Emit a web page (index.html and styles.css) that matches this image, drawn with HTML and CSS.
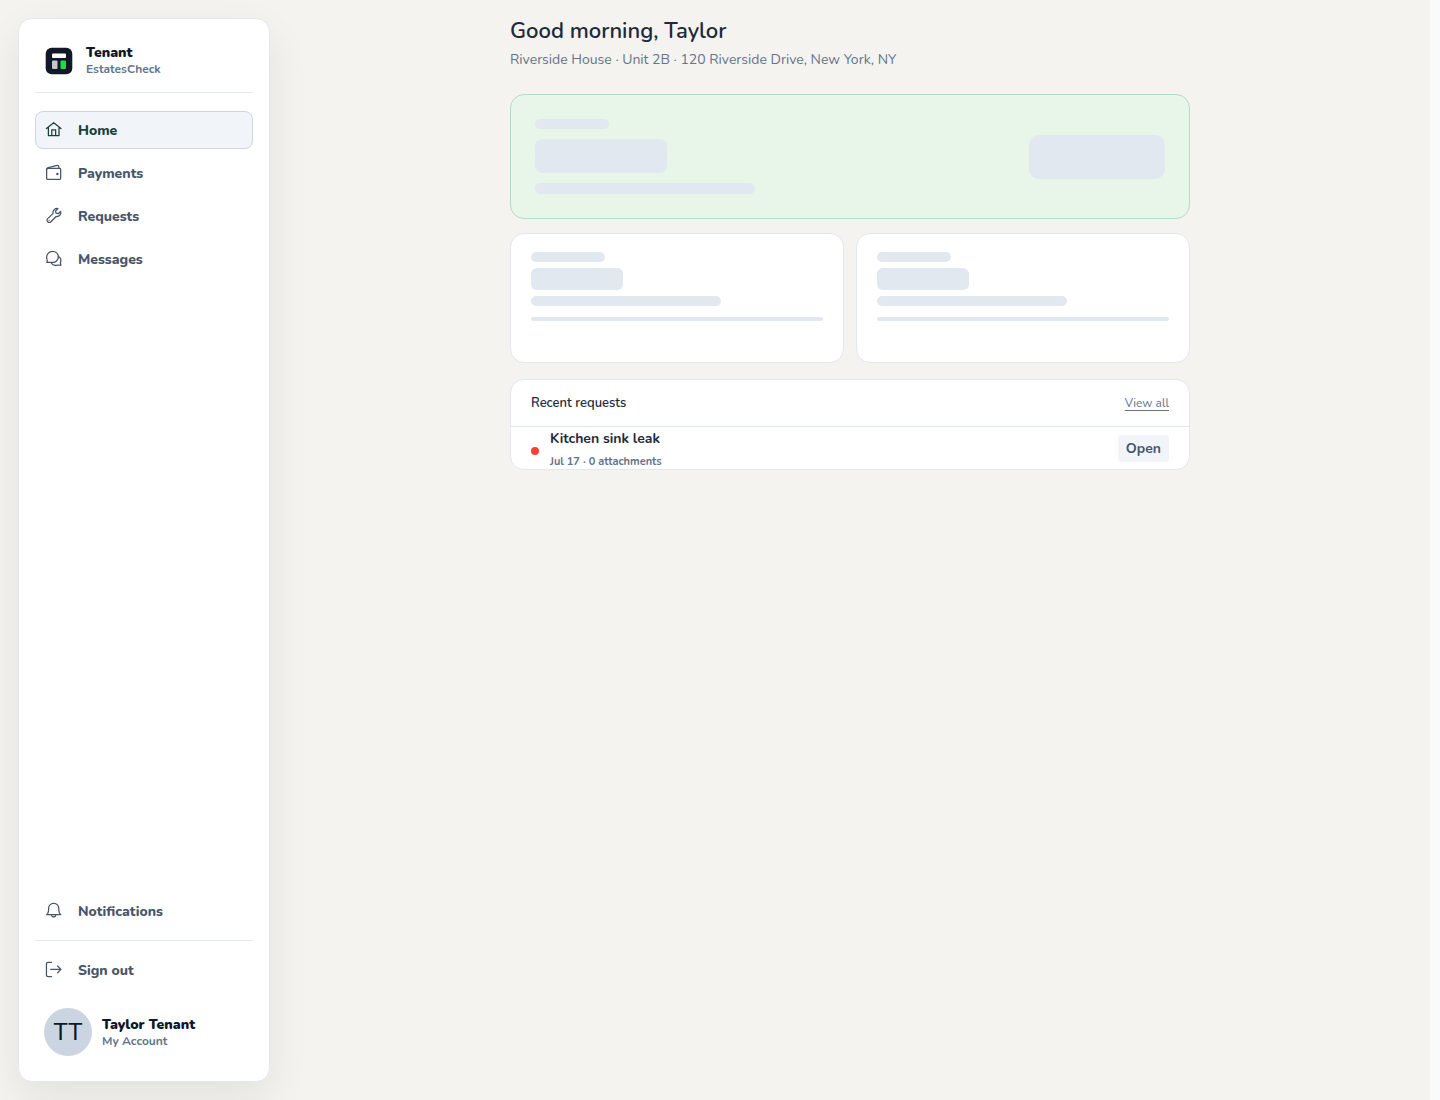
FILE: index.html
```html
<!DOCTYPE html>
<html lang="en">
<head>
    <meta charset="UTF-8">
    <meta name="viewport" content="width=device-width, initial-scale=1.0">
    <title>Home - EstatesCheck</title>
    <link rel="stylesheet" href="styles.css">
</head>
<body>

<div class="app">
    <aside class="sidebar">
        <a class="brand" href="#">
            <svg class="brand-logo" viewBox="0 0 28 28" aria-hidden="true">
                <rect x="0.7" y="0.7" width="26.6" height="26.6" rx="6" fill="#111827"/>
                <rect x="7" y="6.5" width="14" height="4.5" rx="1" fill="#fff"/>
                <rect x="7" y="13.5" width="5.5" height="8.5" rx="1" fill="#c4c7ce"/>
                <rect x="15.5" y="13.5" width="5.5" height="8.5" rx="1" fill="#22d94a"/>
            </svg>
            <span class="brand-text">
                <span class="name">Tenant</span>
                <span class="sub">EstatesCheck</span>
            </span>
        </a>

        <nav class="nav">
            <a class="nav-item active" href="#">
                <svg class="icon" viewBox="-0.5 -0.3 18.6 18.6" aria-hidden="true">
                    <path d="M1 7.5 8.500 1.500l7.500 6M3 6v8.700h11V6M6.500 14.500V8.800h4v5.700"/>
                </svg>
                <span>Home</span>
            </a>
            <a class="nav-item" href="#">
                <svg class="icon" viewBox="-0.5 -0.3 18.6 18.6" aria-hidden="true">
                    <rect x="1.2" y="4.3" width="14.5" height="11.2" rx="1"/>
                    <path d="M1.300 5c0-.8.6-1.300 1.500-1.500l9.400-2.300c1-.2 1.600.3 1.600 1.200v1.900"/>
                    <circle cx="12.300" cy="10" r="0.600" fill="currentColor"/>
                </svg>
                <span>Payments</span>
            </a>
            <a class="nav-item" href="#">
                <svg class="icon" viewBox="-0.5 -0.3 18.6 18.6" aria-hidden="true">
                    <path d="M15.600 4.200c.9 3-1.300 5.700-4.600 5.300L5.600 15c-.9.9-2.400.9-3.300 0s-.9-2.400 0-3.300l5.400-5.200C7.300 3.200 9.900.8 12.900 1.300l-2.500 2.600.4 2.200 2.300.5z"/>
                    <path d="M3.800 13.400v.1"/>
                </svg>
                <span>Requests</span>
            </a>
            <a class="nav-item" href="#">
                <svg class="icon" viewBox="-0.5 -0.3 18.6 18.6" aria-hidden="true">
                    <path d="M1.300 12.600c.5-.9.800-1.800.4-2.600C.1 5.600 2.900 1 7.300 1c3.400 0 6 2.500 6 5.700s-2.600 5.900-5.800 5.900z"/>
                    <path d="M5.700 12.900c1.600 2.600 4.500 3.300 7.200 2.300l3 .4-.5-2.700c1.100-2.700.2-5.300-2.200-6.800"/>
                </svg>
                <span>Messages</span>
            </a>
        </nav>

        <div class="sidebar-bottom">
            <a class="nav-item" href="#">
                <svg class="icon" viewBox="-0.5 -0.3 18.6 18.6" aria-hidden="true">
                    <path d="M1.200 12.800c1.400-1.300 2-2.700 2-4.700V6.500c0-3.200 2.100-5.300 5.300-5.300s5.300 2.100 5.300 5.300v1.600c0 2 .6 3.400 2 4.700zM6.200 13c.2 1.300 1.100 2.200 2.300 2.200s2.100-.9 2.300-2.200"/>
                </svg>
                <span>Notifications</span>
            </a>
            <hr class="divider">
            <button type="button" class="nav-item">
                <svg class="icon" viewBox="-0.5 -0.3 18.6 18.6" aria-hidden="true">
                    <path d="M6.200 1H2.700C1.700 1 1 1.700 1 2.700v11.500c0 1 .7 1.700 1.700 1.700h3.500M5.500 8.400H16M12.500 4.900 16 8.400l-3.500 3.500"/>
                </svg>
                <span>Sign out</span>
            </button>
            <a class="account" href="#">
                <span class="avatar">TT</span>
                <span class="account-text">
                    <span class="name">Taylor Tenant</span>
                    <span class="sub">My Account</span>
                </span>
            </a>
        </div>
    </aside>

    <main class="main">
        <div class="content">
            <header class="page-header">
                <h1>Good morning, Taylor</h1>
                <p>Riverside House · Unit 2B · 120 Riverside Drive, New York, NY</p>
            </header>

            <section class="rent-card" aria-label="Rent" aria-busy="true">
                <div class="rent-lines">
                    <div class="skeleton sk-label"></div>
                    <div class="skeleton sk-amount"></div>
                    <div class="skeleton sk-note"></div>
                </div>
                <div class="skeleton sk-button"></div>
            </section>

            <div class="stats">
                <section class="stat-card" aria-busy="true">
                    <div class="skeleton sk-label"></div>
                    <div class="skeleton sk-value"></div>
                    <div class="skeleton sk-line"></div>
                    <div class="skeleton sk-bar"></div>
                </section>
                <section class="stat-card" aria-busy="true">
                    <div class="skeleton sk-label"></div>
                    <div class="skeleton sk-value"></div>
                    <div class="skeleton sk-line"></div>
                    <div class="skeleton sk-bar"></div>
                </section>
            </div>

            <section class="requests">
                <div class="requests-head">
                    <h2>Recent requests</h2>
                    <a href="#">View all</a>
                </div>
                <div class="request">
                    <span class="dot"></span>
                    <div class="request-text">
                        <div class="request-title">Kitchen sink leak</div>
                        <div class="request-meta">Jul 17 · 0 attachments</div>
                    </div>
                    <span class="status">Open</span>
                </div>
            </section>
        </div>
    </main>
</div>

</body>
</html>
```
FILE: styles.css
```css
* {
    box-sizing: border-box;
}
body {
    margin: 0;
    background-color: #f8fafc;
    color: #1e293b;
    font-family: Nunito, "Open Sans", sans-serif;
    font-size: 14px;
}
a {
    color: inherit;
    text-decoration: none;
}
.app {
    display: flex;
    min-height: 100vh;
    margin-right: 10px;
    background-color: #f4f3ef;
}

/* Sidebar */
.sidebar {
    display: flex;
    flex-direction: column;
    flex-shrink: 0;
    width: 252px;
    height: calc(100vh - 36px);
    margin: 18px 0 18px 18px;
    padding: 16px;
    background-color: #fff;
    border: 1px solid #e2e8f0;
    border-radius: 14px;
    box-shadow: 0 16px 40px rgba(15, 23, 42, 0.08);
}
.brand {
    display: flex;
    align-items: center;
    gap: 13px;
    padding: 9px 10px 15px;
    border-bottom: 1px solid #e2e8f0;
}
.brand-logo {
    width: 28px;
    height: 28px;
}
.brand-text, .account-text {
    display: flex;
    flex-direction: column;
}
.name {
    color: #0f172a;
    font-size: 14px;
    font-weight: 900;
    line-height: 17px;
}
.sub {
    color: #64748b;
    font-size: 12px;
    font-weight: 700;
    line-height: 16px;
}
.nav {
    display: flex;
    flex-direction: column;
    gap: 5px;
    margin-top: 18px;
}
.nav-item {
    display: flex;
    align-items: center;
    gap: 15px;
    width: 100%;
    height: 38px;
    padding: 0 9px;
    background: none;
    border: 1px solid transparent;
    border-radius: 8px;
    color: #475569;
    font-family: inherit;
    font-size: 14px;
    font-weight: 800;
    cursor: pointer;
}
.nav-item.active {
    background-color: #f1f5f9;
    border-color: #cbd5e1;
    color: #1c4038;
}
.icon {
    width: 18px;
    height: 18px;
    fill: none;
    stroke: currentColor;
    stroke-width: 1.3;
    stroke-linecap: round;
    stroke-linejoin: round;
}
.sidebar-bottom {
    margin-top: auto;
}
.divider {
    margin: 10px 0;
    border: 0;
    border-top: 1px solid #e2e8f0;
}
.account {
    display: flex;
    align-items: center;
    gap: 10px;
    margin-top: 10px;
    padding: 9px;
}
.avatar {
    display: flex;
    align-items: center;
    justify-content: center;
    width: 48px;
    height: 48px;
    border-radius: 50%;
    background-color: #cbd5e1;
    color: #0f172a;
    font-family: "Liberation Sans", Arial, sans-serif;
    font-size: 24px;
}

/* Page */
.main {
    flex: 1;
    padding: 16px 24px;
}
.content {
    max-width: 680px;
    margin: 0 auto;
}
.page-header {
    margin-bottom: 24px;
}
h1 {
    margin: 0 0 4px;
    font-size: 22px;
    font-weight: 600;
    line-height: 30px;
}
.page-header p {
    margin: 0;
    color: #64748b;
    line-height: 20px;
}
.skeleton {
    background-color: #e2e8f0;
    border-radius: 6px;
}
.rent-card {
    display: flex;
    align-items: center;
    justify-content: space-between;
    padding: 24px;
    background-color: #e8f5e9;
    border: 1px solid #b3dbc5;
    border-radius: 14px;
}
.rent-lines {
    display: flex;
    flex-direction: column;
    gap: 10px;
}
.sk-label {
    width: 74px;
    height: 10px;
}
.sk-amount {
    width: 132px;
    height: 34px;
    border-radius: 8px;
}
.sk-note {
    width: 220px;
    height: 11px;
}
.sk-button {
    width: 136px;
    height: 44px;
    border-radius: 10px;
}
.stats {
    display: grid;
    grid-template-columns: 1fr 1fr;
    gap: 12px;
    margin: 14px 0 16px;
}
.stat-card {
    display: flex;
    flex-direction: column;
    gap: 6px;
    min-height: 130px;
    padding: 18px 20px;
    background-color: #fff;
    border: 1px solid #e2e8f0;
    border-radius: 14px;
}
.sk-value {
    width: 92px;
    height: 22px;
}
.sk-line {
    width: 190px;
    height: 10px;
}
.sk-bar {
    height: 4px;
    margin-top: 5px;
    border-radius: 2px;
}

/* Recent requests */
.requests {
    background-color: #fff;
    border: 1px solid #e2e8f0;
    border-radius: 14px;
    overflow: hidden;
}
.requests-head {
    display: flex;
    align-items: center;
    justify-content: space-between;
    padding: 13px 20px;
    border-bottom: 1px solid #e2e8f0;
}
.requests-head h2 {
    margin: 0;
    font-size: 13px;
    font-weight: 600;
    line-height: 20px;
}
.requests-head a {
    color: #64748b;
    font-size: 12px;
    line-height: 18px;
    text-decoration: underline;
    text-underline-offset: 3px;
}
.request {
    display: flex;
    align-items: center;
    gap: 11px;
    padding: 0 20px;
}
.dot {
    width: 8px;
    height: 8px;
    margin-top: 5px;
    border-radius: 50%;
    background-color: #f44336;
}
.request-text {
    flex: 1;
}
.request-title {
    font-weight: 700;
    line-height: 24px;
}
.request-meta {
    padding-top: 4px;
    color: #64748b;
    font-size: 11px;
    font-weight: 700;
    line-height: 14px;
}
.status {
    padding: 4px 8px;
    background-color: #f1f5f9;
    border-radius: 4px;
    color: #475569;
    font-weight: 700;
    line-height: 19px;
}
```
